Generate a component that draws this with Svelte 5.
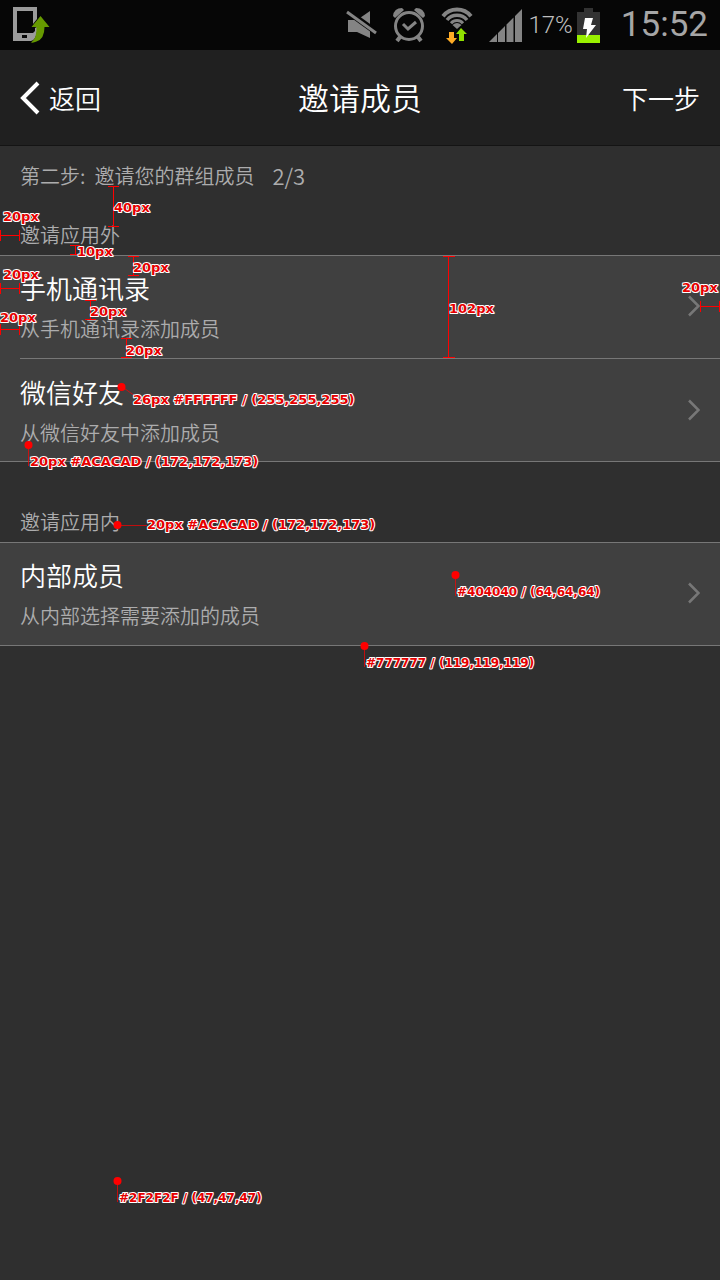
<script>
  const groups = [
    {
      label: '邀请应用外',
      rows: [
        { title: '手机通讯录', note: '从手机通讯录添加成员' },
        { title: '微信好友', note: '从微信好友中添加成员' },
      ],
    },
    {
      label: '邀请应用内',
      rows: [{ title: '内部成员', note: '从内部选择需要添加的成员' }],
    },
  ];

  // Measurement brackets and their leader lines
  const brackets = [
    'M108 186.5h11M113.5 187v39M108 226.5h11',
    'M.5 230v11M1 235.5h18M19.5 230v11',
    'M70 245.5h10M75.5 246v8M70 254.5h10',
    'M128 256.5h11M133.5 257v18M128 275.5h11',
    'M.5 283v11M1 288.5h18M19.5 283v11',
    'M85 300.5h11M90.5 301v18M85 319.5h11',
    'M.5 324v11M1 329.5h18M19.5 324v11',
    'M121 338.5h11M126.5 339v18M121 357.5h11',
    'M443 256.5h12M448.5 257v100M443 357.5h12',
  ];
  const leaders = [
    'M121 386l14 10',
    'M28.5 444v22',
    'M117 525.5h30',
    'M455.5 574v22',
    'M364.5 645v22',
    'M117.5 1180v22',
  ];
  const dots = [
    [121, 387],
    [28, 445],
    [117, 525],
    [455, 575],
    [364, 646],
    [117, 1181],
  ];
  const notes = [
    [114, 212, '40px'],
    [3, 221, '20px'],
    [77, 256, '10px'],
    [133, 272, '20px'],
    [3, 279, '20px'],
    [90, 316, '20px'],
    [0, 322, '20px'],
    [126, 355, '20px'],
    [449, 313, '102px'],
    [133, 404, '26px #FFFFFF / (255,255,255)'],
    [30, 466, '20px #ACACAD / (172,172,173)'],
    [147, 529, '20px #ACACAD / (172,172,173)'],
  ];
  const swatches = [
    [457, 596, '#404040 / (64,64,64)'],
    [366, 667, '#777777 / (119,119,119)'],
    [119, 1202, '#2F2F2F / (47,47,47)'],
  ];
</script>

<div class="screen">
  <div class="status">
    <svg class="share" width="38" height="38" viewBox="0 0 38 38" aria-hidden="true">
      <path fill="#9b9b9b" fill-rule="evenodd" d="M1 1h24v12l-4 5v-13h-16v22h16l2-2v-3l2-1v4q-1 9-6 10H1zM10 29v3h5v-3z" />
      <path fill="#669900" d="M28.500 10l9 11h-5q0 12-8 14.500q-3 1.500-5.500 1q6-4 5.500-15.500h-5z" />
    </svg>
    <div class="indicators">
      <svg class="mute" width="31" height="30" viewBox="0 0 31 30" aria-hidden="true">
        <path fill="#848484" d="M2 10h9L24 1v27l-13-6H2z" />
        <path stroke="#060606" stroke-width="6" d="M1 1l29 21" />
        <path stroke="#848484" stroke-width="3" d="M1 2l29 21" />
      </svg>
      <svg class="alarm" width="32" height="36" viewBox="0 0 32 36" fill="none" stroke="#848484" aria-hidden="true">
        <circle cx="16" cy="19" r="13.500" stroke-width="3" />
        <path stroke-width="3" d="M10 17l5 5 8-7" />
        <path stroke-width="4" d="M7 30l-3 4M25 30l3 4" />
        <path fill="#848484" stroke="none" d="M0 9Q1 1 9 1l2 2-9 8zM32 9Q31 1 23 1l-2 2 9 8z" />
      </svg>
      <svg class="wifi" width="32" height="37" viewBox="0 0 32 37" fill="none" aria-hidden="true">
        <g stroke="#848484">
          <path stroke-width="4" d="M2 9.200A18 18 0 0 1 30 9.200" />
          <path stroke-width="3.500" d="M6 13A12.800 12.800 0 0 1 26 13" />
          <path stroke-width="3" d="M10 16.200A8 8 0 0 1 22 16.200" />
        </g>
        <path fill="#848484" d="M11.500 18q4.500-4 9 0L16 22z" />
        <path fill="#8fe000" d="M20 21l6 6h-3v7h-5v-7h-3z" />
        <path fill="#ffac26" d="M8 25h5v6h3l-5 6-6-6h3z" />
      </svg>
      <svg class="signal" width="33" height="33" viewBox="0 0 33 33" fill="#848484" aria-hidden="true">
        <path d="M0 33l8-8v8zM9 24l7-7v16H9zM17.500 15.500l7-7V33h-7zM26 7l7-7v33h-7z" />
      </svg>
      <span class="percent">17%</span>
      <svg class="battery" width="23" height="35" viewBox="0 0 23 35" aria-hidden="true">
        <path fill="#333" d="M7 0h9v4h7v23H0V4h7z" />
        <path fill="#99f000" d="M0 27h23v8H0z" />
        <path fill="#fff" d="M8 10h8l-2 7h5L9 30l1-9H6z" />
      </svg>
      <time class="clock">15:52</time>
    </div>
  </div>

  <header>
    <button class="back">
      <svg width="20" height="34" viewBox="0 0 20 34" aria-hidden="true">
        <path fill="none" stroke="#fff" stroke-width="4" d="M18 2L3 17l15 15" />
      </svg>
      <span>返回</span>
    </button>
    <h1>邀请成员</h1>
    <button class="next">下一步</button>
  </header>

  <main>
    <p class="step">
      <span>第二步:</span>
      <span>邀请您的群组成员</span>
      <span class="count">2/3</span>
    </p>
    {#each groups as group}
      <section>
        <h2>{group.label}</h2>
        <div class="list">
          {#each group.rows as row}
            <button class="row">
              <span class="text">
                <span class="title">{row.title}</span>
                <span class="note">{row.note}</span>
              </span>
              <svg width="13" height="22" viewBox="0 0 13 22" aria-hidden="true">
                <path fill="none" stroke="#777" stroke-width="2.500" d="M2 1.500L11.500 11 2 20.500" />
              </svg>
            </button>
          {/each}
        </div>
      </section>
    {/each}
  </main>

  <svg class="marks" aria-hidden="true">
    <g class="line">
      {#each brackets as d}<path {d} />{/each}
      {#each leaders as d}<path {d} opacity="0.7" />{/each}
    </g>
    {#each dots as [x, y]}<circle cx={x + 0.5} cy={y} r="4" fill="#f00" />{/each}
    {#each notes as [x, y, label]}<text {x} {y}>{label}</text>{/each}
    {#each swatches as [x, y, label]}<text class="small" {x} {y}>{label}</text>{/each}
  </svg>
  <svg class="marks edge" aria-hidden="true">
    <path class="line" d="M20.500 301v11M21 306.500h18M39.500 301v11" />
    <text x="2" y="292">20px</text>
  </svg>
</div>

<style>
  :global(body) {
    margin: 0;
    background: #2f2f2f;
  }
  .screen {
    position: relative;
    min-height: 100vh;
    overflow: hidden;
    background: #2f2f2f;
    color: #acacad;
    font-family: 'Noto Sans CJK SC', sans-serif;
    font-weight: 350;
  }
  svg {
    display: block;
    flex: none;
  }
  button {
    margin: 0;
    padding: 0;
    border: 0;
    background: none;
    color: #fff;
    font: inherit;
    text-align: left;
    cursor: pointer;
  }
  .status {
    display: flex;
    justify-content: space-between;
    align-items: center;
    height: 50px;
    padding: 0 12px;
    background: #060606;
    font-family: Roboto, sans-serif;
  }
  .indicators {
    display: flex;
    align-items: center;
  }
  .alarm,
  .wifi,
  .signal {
    margin-left: 16px;
  }
  .percent {
    margin-left: 6px;
    color: #bebebe;
    font-size: 24px;
    font-weight: 300;
    line-height: 50px;
  }
  .battery {
    margin-left: 4px;
  }
  .clock {
    margin-left: 21px;
    color: #a6a6a6;
    font-size: 35px;
    line-height: 50px;
    font-weight: 400;
  }
  header {
    display: grid;
    grid-template-columns: 1fr auto 1fr;
    align-items: center;
    height: 95px;
    padding: 0 20px;
    border-bottom: 1px solid #141414;
    background: #202020;
    font-size: 26px;
  }
  .back {
    display: flex;
    align-items: center;
    justify-self: start;
    gap: 9px;
  }
  .next {
    justify-self: end;
  }
  h1 {
    margin: 0;
    color: #fff;
    font-size: 31px;
    font-weight: inherit;
    line-height: 44px;
    padding-bottom: 2px;
  }
  .step {
    display: flex;
    align-items: center;
    gap: 9px;
    height: 58px;
    margin: 0;
    padding: 0 20px;
    font-size: 20px;
  }
  .count {
    padding-left: 9px;
    font-size: 22px;
  }
  h2 {
    margin: 0;
    padding: 14px 20px 3px;
    font-size: 20px;
    line-height: 34px;
    font-weight: inherit;
  }
  section + section {
    margin-top: 29px;
  }
  .list {
    border-top: 1px solid #777;
    border-bottom: 1px solid #777;
    background: #404040;
  }
  .row {
    display: flex;
    align-items: center;
    justify-content: space-between;
    box-sizing: border-box;
    width: 100%;
    min-height: 102px;
    padding: 15px 20px 17px;
  }
  .row + .row {
    width: calc(100% - 20px);
    margin-left: 20px;
    padding: 16px 20px 16px 0;
    min-height: 103px;
    border-top: 1px solid #777;
  }
  .text {
    display: flex;
    flex-direction: column;
    gap: 12px;
  }
  .title {
    font-size: 26px;
    line-height: 34px;
  }
  .note {
    color: #acacad;
    font-size: 20px;
    line-height: 24px;
  }
  .marks {
    position: absolute;
    top: 0;
    left: 0;
    width: 100%;
    height: 100%;
    pointer-events: none;
  }
  .edge {
    right: 0;
    left: auto;
    width: 40px;
  }
  .line {
    fill: none;
    stroke: #f00;
    stroke-width: 1px;
  }
  .marks text {
    fill: #e60000;
    stroke: #fff;
    stroke-width: 2px;
    stroke-linejoin: round;
    paint-order: stroke;
    font-family: 'DejaVu Sans', sans-serif;
    font-size: 13px;
    font-weight: 700;
  }
  .marks .small {
    font-size: 12px;
  }
</style>
